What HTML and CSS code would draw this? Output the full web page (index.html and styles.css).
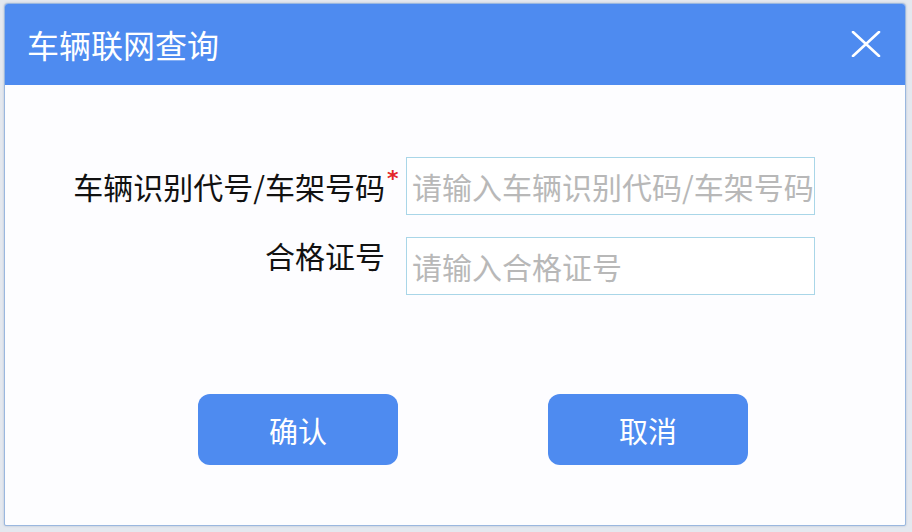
FILE: index.html
```html
<!DOCTYPE html>
<html lang="zh-CN">
<head>
<meta charset="utf-8">
<title>车辆联网查询</title>
<link rel="stylesheet" href="styles.css">
</head>
<body>
<div class="dialog">
  <div class="dialog-header">
    <span class="dialog-title">车辆联网查询</span>
    <svg class="close-icon" width="30" height="26" viewBox="0 0 30 26">
      <path d="M2 1 L28 25 M28 1 L2 25" stroke="#ffffff" stroke-width="2.6" stroke-linecap="round" fill="none"/>
    </svg>
  </div>
  <div class="dialog-body">
    <div class="form">
      <div class="form-row">
        <label class="form-label">车辆识别代号/车架号码</label>
        <span class="required">*</span>
        <input class="form-input" type="text" placeholder="请输入车辆识别代码/车架号码">
      </div>
      <div class="form-row form-row-top">
        <label class="form-label">合格证号</label>
        <span class="required"></span>
        <input class="form-input" type="text" placeholder="请输入合格证号">
      </div>
    </div>
    <div class="actions">
      <button class="btn">确认</button>
      <button class="btn">取消</button>
    </div>
  </div>
</div>
</body>
</html>
```
FILE: styles.css
```css
html, body {
  margin: 0;
  padding: 0;
}
body {
  width: 912px;
  height: 532px;
  background: #e4e8ef;
  font-family: "Noto Sans CJK SC", "Noto Sans", sans-serif;
  overflow: hidden;
}
.dialog {
  margin: 3px 6px 0 4px;
  height: 523px;
  box-sizing: border-box;
  border: 1px solid #9ab7df;
  border-radius: 4px 4px 2px 2px;
  background: #fdfdff;
  display: flex;
  flex-direction: column;
  overflow: hidden;
  box-shadow: 0 0 2px rgba(120, 140, 170, 0.5);
}
.dialog-header {
  height: 81px;
  flex: none;
  background: #4e8bf0;
  display: flex;
  align-items: center;
  justify-content: space-between;
  padding: 0 24px 0 22px;
}
.dialog-title {
  color: #ffffff;
  font-size: 32px;
  line-height: 40px;
  margin-top: -1px;
}
.close-icon {
  display: block;
  margin-top: -2px;
}
.dialog-body {
  flex: 1;
  display: flex;
  flex-direction: column;
}
.form {
  margin-top: 72px;
  padding-left: 60px;
  display: flex;
  flex-direction: column;
  gap: 22px;
}
.form-row {
  display: flex;
  align-items: center;
}
.form-row-top {
  align-items: flex-start;
}
.form-label {
  width: 320px;
  text-align: right;
  font-size: 30px;
  line-height: 36px;
  color: #111111;
  white-space: nowrap;
}
.required {
  width: 21px;
  align-self: flex-start;
  color: #e3262a;
  font-family: "DejaVu Sans", sans-serif;
  font-weight: bold;
  font-size: 22px;
  line-height: 22px;
  height: 22px;
  margin-top: 11px;
  padding-left: 2px;
  box-sizing: border-box;
}
.form-input {
  width: 409px;
  height: 58px;
  box-sizing: border-box;
  border: 1px solid #a9d6e8;
  border-radius: 0;
  background: #ffffff;
  padding: 0 0 0 5px;
  margin: 0;
  font-family: "Noto Sans CJK SC", "Noto Sans", sans-serif;
  font-size: 30px;
  color: #333333;
  outline: none;
}
.form-input::placeholder {
  color: #b8b8b8;
}
.actions {
  margin-top: 99px;
  padding-left: 193px;
  display: flex;
  gap: 150px;
}
.btn {
  width: 200px;
  height: 71px;
  border: none;
  border-radius: 12px;
  background: #4e8bf0;
  color: #ffffff;
  font-family: "Noto Sans CJK SC", "Noto Sans", sans-serif;
  font-size: 29px;
  line-height: 36px;
  padding: 0;
  cursor: pointer;
}
```
